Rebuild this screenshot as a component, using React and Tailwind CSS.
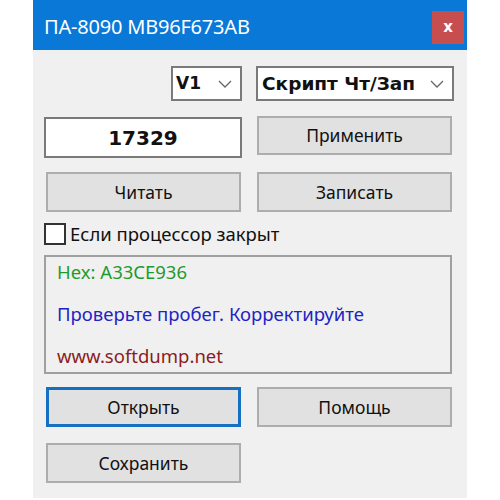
import React from 'react'

const Chevron = () => (
  <svg width="14" height="8" viewBox="0 0 14 8" className="text-[#666]">
    <path d="M1 1 L7 7 L13 1" fill="none" stroke="currentColor" strokeWidth="1.3" />
  </svg>
)

const Btn = ({ children, focused, className = '' }) => (
  <div
    className={
      'flex items-center justify-center bg-[#e1e1e1] text-[17.5px] text-[#111] ' +
      (focused ? 'border-[3px] border-[#1570c4] ' : 'border-2 border-[#adadad] ') +
      className
    }
  >
    {children}
  </div>
)

const App = () => {
  return (
    <div className="w-[500px] h-[500px] bg-white font-['Noto_Sans',sans-serif]">
      <div className="ml-[33px] w-[434px] h-[498px] bg-[#f0f0f0] flex flex-col">
        {/* Title bar */}
        <div className="h-[50px] bg-[#0a78d7] flex items-center justify-between pl-[11px] pr-[3px]">
          <span className="text-white text-[20px] tracking-[-0.2px] mt-[3px]">ПА-8090 MB96F673AB</span>
          <div className="w-[32px] h-[33px] mt-[4px] bg-[#c74e4e] flex items-center justify-center text-white text-[15px] font-bold font-['DejaVu_Sans',sans-serif] leading-none">
            x
          </div>
        </div>

        <div className="pl-[11px] pr-[13px] flex flex-col">
          {/* Dropdowns */}
          <div className="mt-[16px] flex justify-end gap-[14px] font-['DejaVu_Sans',sans-serif] font-bold text-[#111]">
            <div className="w-[71px] h-[35px] bg-white border-2 border-[#7a7a7a] flex items-center justify-between pl-[3px] pr-[8px] text-[17px]">
              <span>V1</span>
              <Chevron />
            </div>
            <div className="w-[198px] h-[35px] bg-white border-2 border-[#7a7a7a] flex items-center justify-between pl-[4px] pr-[8px] text-[18.5px]">
              <span>Скрипт Чт/Зап</span>
              <Chevron />
            </div>
          </div>

          {/* Value + apply */}
          <div className="mt-[16px] flex gap-[15px] items-start">
            <div className="w-[198px] h-[41px] bg-white border-2 border-[#7a7a7a] flex items-center justify-center font-['DejaVu_Sans',sans-serif] font-bold text-[20px] text-[#111]">
              17329
            </div>
            <Btn className="w-[195px] h-[39px] -mt-px">Применить</Btn>
          </div>

          {/* Read / write */}
          <div className="mt-[14px] flex gap-[16px] pl-[2px]">
            <Btn className="w-[195px] h-[40px]">Читать</Btn>
            <Btn className="w-[195px] h-[40px]">Записать</Btn>
          </div>

          {/* Checkbox */}
          <div className="mt-[11px] flex items-center gap-[4px] h-[22px]">
            <div className="w-[22px] h-[22px] bg-white border-2 border-[#333]" />
            <span className="text-[18.5px] text-[#111]">Если процессор закрыт</span>
          </div>

          {/* Info box */}
          <div className="mt-[10px] w-[408px] h-[119px] border-2 border-[#a0a0a0] flex flex-col justify-between pl-[11px] pt-[1px] pb-[2px] text-[18.5px]">
            <span className="text-[#1f9a2e]">Hex: A33CE936</span>
            <span className="text-[#2323c4]">Проверьте пробег. Корректируйте</span>
            <span className="text-[#8b1c1c]">www.softdump.net</span>
          </div>

          {/* Open / help */}
          <div className="mt-[13px] flex gap-[16px] pl-[2px]">
            <Btn focused className="w-[195px] h-[40px]">Открыть</Btn>
            <Btn className="w-[195px] h-[40px]">Помощь</Btn>
          </div>

          {/* Save */}
          <div className="mt-[16px] flex pl-[2px]">
            <Btn className="w-[195px] h-[40px]">Сохранить</Btn>
          </div>
        </div>
      </div>
    </div>
  )
}

export default App
